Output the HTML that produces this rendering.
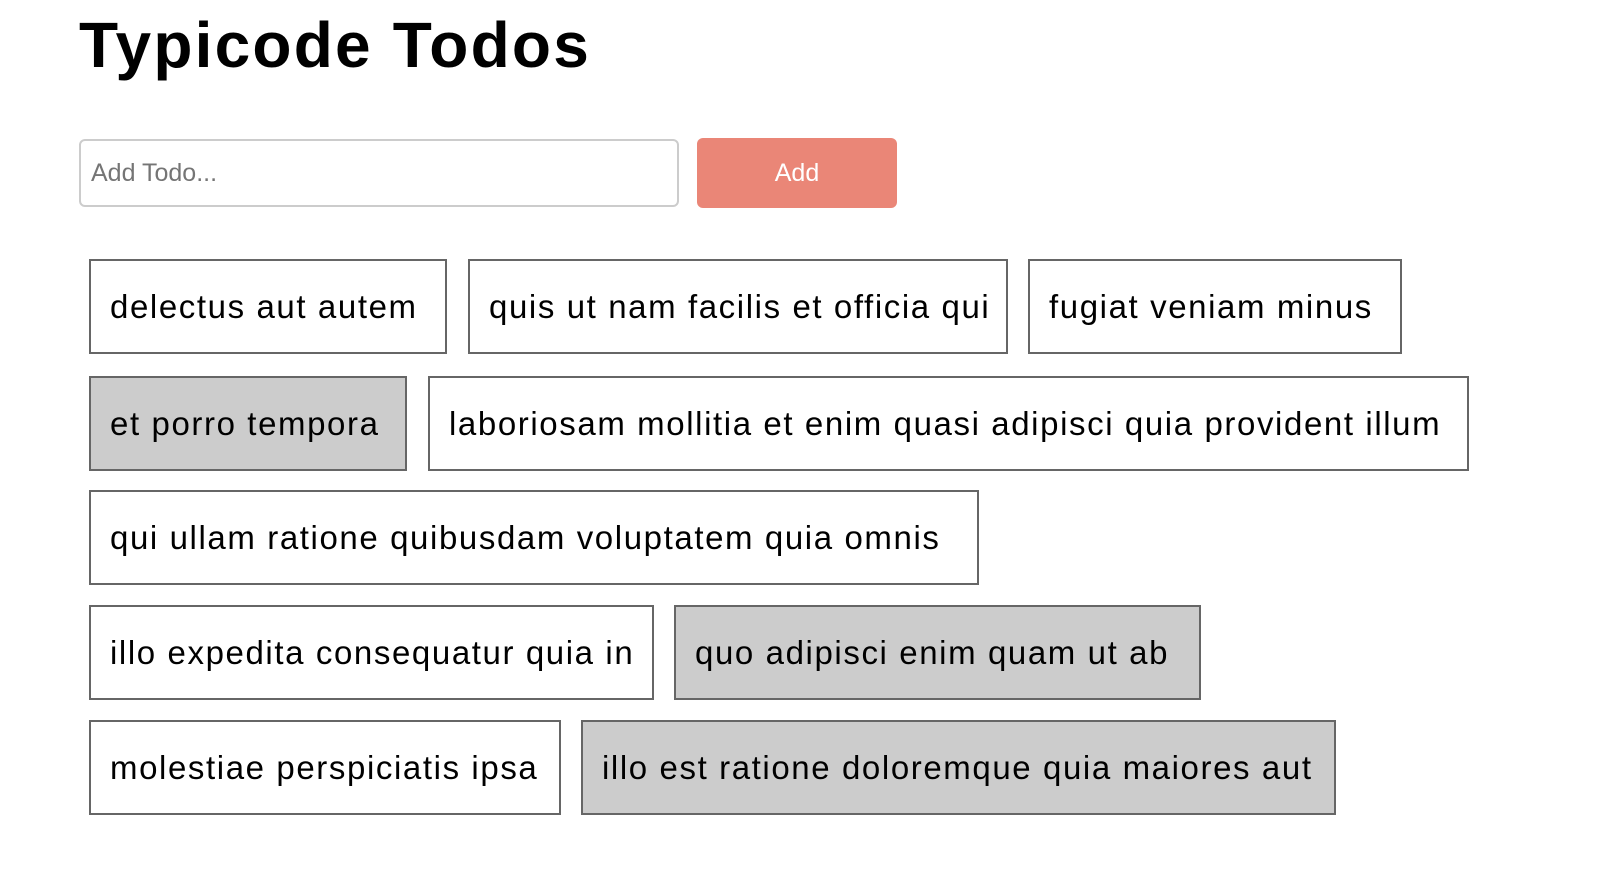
<!DOCTYPE html>
<html><head><style>
body{margin:0;background:#fff;font-family:"Liberation Sans",sans-serif;width:1606px;height:878px;overflow:hidden;position:relative}
h1{position:absolute;left:79px;top:8px;margin:0;font-size:64px;font-weight:bold;letter-spacing:2.2px}
.inp{position:absolute;left:79px;top:139px;width:600px;height:68px;border:2px solid #ccc;border-radius:6px;box-sizing:border-box;font-size:25px;color:#757575;padding-left:10px;line-height:64px}
.btn{position:absolute;left:697px;top:138px;width:200px;height:70px;background:#ea8677;border-radius:6px;color:#fff;font-size:25px;text-align:center;line-height:70px}
.b{position:absolute;height:95px;border:2px solid #666;box-sizing:border-box;font-size:33px;line-height:91px;padding-left:19px;white-space:nowrap;color:#000;letter-spacing:1.6px}
.g{background:#ccc}
</style></head><body>
<h1>Typicode Todos</h1>
<div class="inp">Add Todo...</div>
<div class="btn">Add</div>
<div class="b" style="left:89px;top:259px;width:358px">delectus aut autem</div>
<div class="b" style="left:468px;top:259px;width:540px">quis ut nam facilis et officia qui</div>
<div class="b" style="left:1028px;top:259px;width:374px">fugiat veniam minus</div>
<div class="b g" style="left:89px;top:376px;width:318px">et porro tempora</div>
<div class="b" style="left:428px;top:376px;width:1041px">laboriosam mollitia et enim quasi adipisci quia provident illum</div>
<div class="b" style="left:89px;top:490px;width:890px">qui ullam ratione quibusdam voluptatem quia omnis</div>
<div class="b" style="left:89px;top:605px;width:565px">illo expedita consequatur quia in</div>
<div class="b g" style="left:674px;top:605px;width:527px">quo adipisci enim quam ut ab</div>
<div class="b" style="left:89px;top:720px;width:472px">molestiae perspiciatis ipsa</div>
<div class="b g" style="left:581px;top:720px;width:755px">illo est ratione doloremque quia maiores aut</div>
</body></html>
